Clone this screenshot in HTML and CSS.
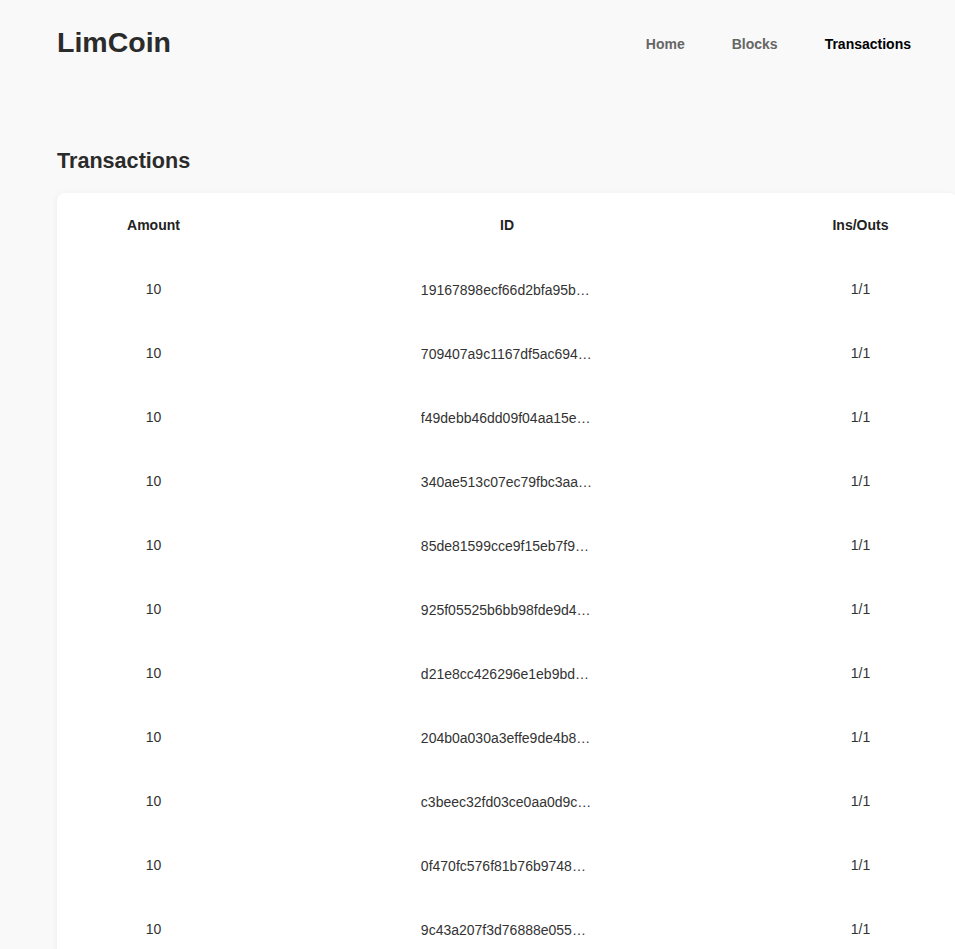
FILE: index.html
```html
<!DOCTYPE html>
<html lang="en">
<head>
<meta charset="utf-8">
<title>LimCoin</title>
<link rel="stylesheet" href="styles.css">
</head>
<body>
<header class="topbar">
  <div class="logo">LimCoin</div>
  <nav class="nav">
    <a class="nav-link" href="#">Home</a>
    <a class="nav-link" href="#">Blocks</a>
    <a class="nav-link active" href="#">Transactions</a>
  </nav>
</header>
<main class="content">
  <h1 class="title">Transactions</h1>
  <section class="card">
    <div class="row head">
      <div class="cell">Amount</div>
      <div class="cell">ID</div>
      <div class="cell">Ins/Outs</div>
    </div>
    <div class="row"><div class="cell">10</div><div class="cell"><span class="hash">19167898ecf66d2bfa95b3c1e7a0d4f2</span></div><div class="cell">1/1</div></div>
    <div class="row"><div class="cell">10</div><div class="cell"><span class="hash">709407a9c1167df5ac694e2b8d0f1a37</span></div><div class="cell">1/1</div></div>
    <div class="row"><div class="cell">10</div><div class="cell"><span class="hash">f49debb46dd09f04aa15e7c3b2d81f06</span></div><div class="cell">1/1</div></div>
    <div class="row"><div class="cell">10</div><div class="cell"><span class="hash">340ae513c07ec79fbc3aa1d8e4f5b290</span></div><div class="cell">1/1</div></div>
    <div class="row"><div class="cell">10</div><div class="cell"><span class="hash">85de81599cce9f15eb7f9a0c3d2e6b41</span></div><div class="cell">1/1</div></div>
    <div class="row"><div class="cell">10</div><div class="cell"><span class="hash">925f05525b6bb98fde9d4a7c1e3b0f82</span></div><div class="cell">1/1</div></div>
    <div class="row"><div class="cell">10</div><div class="cell"><span class="hash">d21e8cc426296e1eb9bd73a07c5e4d19</span></div><div class="cell">1/1</div></div>
    <div class="row"><div class="cell">10</div><div class="cell"><span class="hash">204b0a030a3effe9de4b8c6f1d2a7e53</span></div><div class="cell">1/1</div></div>
    <div class="row"><div class="cell">10</div><div class="cell"><span class="hash">c3beec32fd03ce0aa0d9c5b7e1f4a268</span></div><div class="cell">1/1</div></div>
    <div class="row"><div class="cell">10</div><div class="cell"><span class="hash">0f470fc576f81b76b9748d2e3a1c5f09</span></div><div class="cell">1/1</div></div>
    <div class="row"><div class="cell">10</div><div class="cell"><span class="hash">9c43a207f3d76888e055b1c4d9e2f7a6</span></div><div class="cell">1/1</div></div>
    <div class="row"><div class="cell">10</div><div class="cell"><span class="hash">5e81c0d2a94b73f6e12d8a5c0b3f9e47</span></div><div class="cell">1/1</div></div>
  </section>
</main>
</body>
</html>
```

FILE: styles.css
```css
* { box-sizing: border-box; }

html, body {
  margin: 0;
  padding: 0;
  background: #f9f9f9;
  font-family: "Liberation Sans", Arial, sans-serif;
  color: #333;
  overflow: hidden;
}

.topbar {
  display: flex;
  align-items: center;
  justify-content: space-between;
  height: 86px;
  padding: 0 44px 0 57px;
}

.logo {
  font-size: 28.5px;
  font-weight: bold;
  color: #2b2b2b;
  margin-top: -2px;
}

.nav {
  display: flex;
  gap: 47px;
  margin-top: 2px;
}

.nav-link {
  font-size: 14px;
  font-weight: bold;
  color: #666;
  text-decoration: none;
}

.nav-link.active {
  color: #000;
}

.content {
  padding: 0 0 0 57px;
}

.title {
  margin: 62px 0 0;
  font-size: 21.6px;
  line-height: 26px;
  font-weight: bold;
  color: #2b2b2b;
}

.card {
  margin-top: 19px;
  width: 900px;
  background: #fff;
  border-radius: 8px;
  box-shadow: 0 1px 6px rgba(0, 0, 0, 0.06);
}

.row {
  display: grid;
  grid-template-columns: 193px 514px 193px;
  height: 64px;
  align-items: center;
}

.cell {
  text-align: center;
  font-size: 14px;
  color: #333;
  min-width: 0;
}

.head .cell {
  font-weight: bold;
  color: #222;
}

.hash {
  display: inline-block;
  max-width: 172.3px;
  overflow: hidden;
  white-space: nowrap;
  text-overflow: ellipsis;
  vertical-align: middle;
}
```
